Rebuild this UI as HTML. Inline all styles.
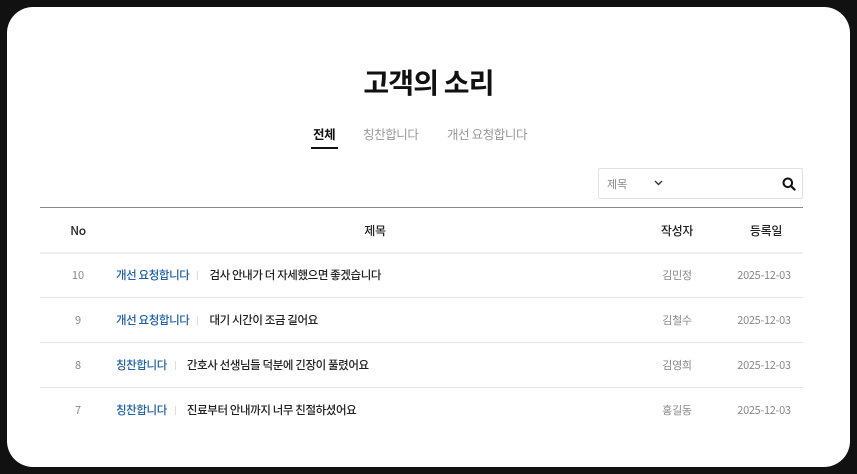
<!DOCTYPE html><html><head><meta charset="utf-8"><style>
*{margin:0;padding:0;box-sizing:border-box}
body{width:857px;height:474px;background:#111;font-family:"Noto Sans CJK KR","Liberation Sans",sans-serif;position:relative;overflow:hidden}
.card{position:absolute;left:7px;top:7px;width:843px;height:460px;background:#fff;border-radius:26px}
.abs{position:absolute;white-space:nowrap;line-height:16px}
h1{position:absolute;left:0;width:843px;top:57px;text-align:center;font-size:28px;line-height:36px;font-weight:700;color:#111;letter-spacing:-0.8px}
.tab{font-size:12.5px;color:#999;top:119px;letter-spacing:-0.4px}
.search{left:591px;top:161px;width:205px;height:31px;border:1px solid #e2e2e2;border-radius:2px}
.line{position:absolute;left:33px;width:763px;height:1px;background:#e6e6e6}
.hd{font-size:12px;color:#222;top:216px;font-weight:500;letter-spacing:-0.3px}
.c{transform:translateX(-50%)}
.no{font-size:11px;color:#888}
.row{position:absolute;left:109px;display:flex;align-items:center;white-space:nowrap;line-height:16px;font-size:11.5px;letter-spacing:-0.4px;font-weight:500}
.cat{color:#1d5fa8}
.tt{color:#222}
.gr{font-size:11px;color:#888;letter-spacing:-0.3px}
.sep{width:1px;height:9px;background:#ddd;margin:0 11px 0 8px}
</style></head><body><div class="card">
<h1>고객의 소리</h1>
<div class="abs tab" style="left:306px;color:#111;font-weight:700">전체</div>
<div class="abs" style="left:304px;top:140px;width:27px;height:2px;background:#111"></div>
<div class="abs tab" style="left:356px">칭찬합니다</div>
<div class="abs tab" style="left:440px">개선 요청합니다</div>
<div class="abs search">
<span class="abs" style="left:8px;top:7px;font-size:11px;color:#888">제목</span>
<svg class="abs" style="left:55px;top:11px" width="9" height="6" viewBox="0 0 9 6"><path d="M1 1l3.5 3.5L8 1" stroke="#333" stroke-width="1.4" fill="none"/></svg>
<svg class="abs" style="left:183px;top:8px" width="14" height="14" viewBox="0 0 14 14"><circle cx="5.8" cy="5.8" r="4.3" stroke="#111" stroke-width="2" fill="none"/><path d="M9 9l3.6 3.6" stroke="#111" stroke-width="2.2" stroke-linecap="round"/></svg>
</div>
<div class="line" style="top:200px;background:#888"></div>
<div class="abs hd c" style="left:71px">No</div>
<div class="abs hd c" style="left:368px">제목</div>
<div class="abs hd c" style="left:670px">작성자</div>
<div class="abs hd c" style="left:759px">등록일</div>
<div class="line" style="top:245px;height:2px;background:#eee"></div>

<div class="abs no c" style="left:71px;top:260px">10</div>
<div class="row" style="top:260px"><span class="cat">개선 요청합니다</span><span class="sep"></span><span class="tt">검사 안내가 더 자세했으면 좋겠습니다</span></div>
<div class="abs gr c" style="left:670px;top:260px">김민정</div>
<div class="abs gr c" style="left:757px;top:260px">2025-12-03</div>
<div class="line" style="top:290px"></div>

<div class="abs no c" style="left:71px;top:305px">9</div>
<div class="row" style="top:305px"><span class="cat">개선 요청합니다</span><span class="sep"></span><span class="tt">대기 시간이 조금 길어요</span></div>
<div class="abs gr c" style="left:670px;top:305px">김철수</div>
<div class="abs gr c" style="left:757px;top:305px">2025-12-03</div>
<div class="line" style="top:335px"></div>

<div class="abs no c" style="left:71px;top:350px">8</div>
<div class="row" style="top:350px"><span class="cat">칭찬합니다</span><span class="sep"></span><span class="tt">간호사 선생님들 덕분에 긴장이 풀렸어요</span></div>
<div class="abs gr c" style="left:670px;top:350px">김영희</div>
<div class="abs gr c" style="left:757px;top:350px">2025-12-03</div>
<div class="line" style="top:380px"></div>

<div class="abs no c" style="left:71px;top:395px">7</div>
<div class="row" style="top:395px"><span class="cat">칭찬합니다</span><span class="sep"></span><span class="tt">진료부터 안내까지 너무 친절하셨어요</span></div>
<div class="abs gr c" style="left:670px;top:395px">홍길동</div>
<div class="abs gr c" style="left:757px;top:395px">2025-12-03</div>
</div></body></html>
